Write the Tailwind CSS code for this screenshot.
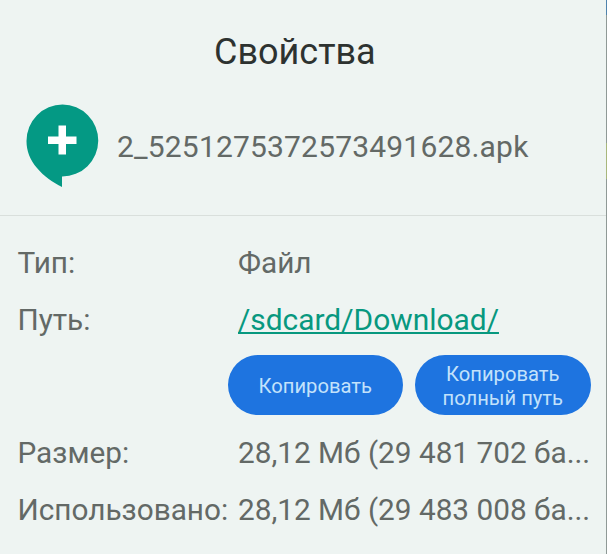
<!DOCTYPE html>
<html lang="ru">
<head>
<meta charset="utf-8">
<title>Свойства</title>
<script src="https://cdn.jsdelivr.net/npm/@tailwindcss/browser@4"></script>
</head>
<body class="bg-[#eef4f2] font-['Roboto',sans-serif]">
<main class="relative w-[607px] h-[554px] overflow-hidden bg-[#eef4f2] text-[30px] text-[#636966]">
  <header class="h-[216px] border-b border-[#d9dfdc]">
    <h1 class="pt-[32px] h-[103px] pl-[214px] text-[36px] leading-[40px] text-[#2d3230] whitespace-nowrap"><span>Свойства</span></h1>
    <div class="flex pl-[25px]">
      <svg class="w-[74px] h-[86px] shrink-0" viewBox="0 0 74 86" aria-hidden="true">
        <path d="M37.500 1.500A36 36 0 0 1 37 73.500V84C28 79.500 19 73.500 12 65C5 57 1.500 48 1.500 38A36 36.500 0 0 1 37.500 1.500Z" fill="#049984"/>
        <path d="M33.500 22.500h7.500V33.500h10.500v7.500H41v10.500h-7.500V41H23v-7.500H33.500Z" fill="#fff"/>
      </svg>
      <p class="pl-[18px] h-[86px] leading-[87px] tracking-[0.18px] whitespace-nowrap"><span>2_5251275372573491628.apk</span></p>
    </div>
  </header>
  <dl class="grid grid-cols-[220.500px_355px] pl-[17.500px] pt-[18px] text-[29.750px] leading-[57px] whitespace-nowrap">
    <dt><span>Тип:</span></dt>
    <dd><span>Файл</span></dd>
    <dt><span>Путь:</span></dt>
    <dd class="text-[29.900px]"><a class="text-[#07987f] underline decoration-[1.500px] underline-offset-[2px]">/sdcard/Download/</a></dd>
    <dd class="col-span-2 flex gap-3 pl-[210px] pt-[7px] h-[76px] text-[20.200px] leading-[24px] text-[#c3e2fb]">
      <button class="w-[175.500px] h-[60px] shrink-0 rounded-[30px] bg-[#1e74e0] pt-[2px]"><span>Копировать</span></button>
      <button class="w-[175.500px] h-[60px] shrink-0 rounded-[30px] bg-[#1e74e0] pt-[2px]"><span>Копировать<br>полный путь</span></button>
    </dd>
    <dt><span>Размер:</span></dt>
    <dd><span>28,12 Мб (29 481 702 ба...</span></dd>
    <dt><span>Использовано:</span></dt>
    <dd><span>28,12 Мб (29 483 008 ба...</span></dd>
  </dl>
  <div class="absolute right-0 top-0 w-px h-full bg-[#8f9996]">
    <div class="h-[15px] bg-[#4f83ad]"></div>
    <div class="mt-[128px] h-[36px] bg-[#a8b77c]"></div>
  </div>
</main>
</body>
</html>
